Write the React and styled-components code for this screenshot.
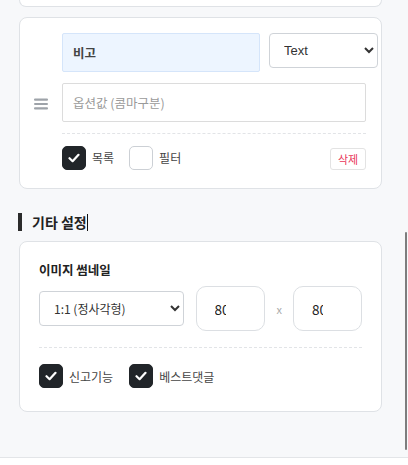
import styled, { createGlobalStyle } from 'styled-components';

const GlobalStyle = createGlobalStyle`
  html, body {
    margin: 0;
    padding: 0;
    background: #ffffff;
    font-family: "Noto Sans CJK KR", "Noto Sans", sans-serif;
  }
`

export default function App() {
  return <>
    <GlobalStyle />
    <Page>
      <Column>
        <TopCard />

        <FieldCard>
          <Handle>
            <svg width="14" height="12" viewBox="0 0 14 12">
              <rect x="0" y="0.5" width="14" height="2.2" rx="1" fill="#9ea3a9" />
              <rect x="0" y="4.9" width="14" height="2.2" rx="1" fill="#9ea3a9" />
              <rect x="0" y="9.3" width="14" height="2.2" rx="1" fill="#9ea3a9" />
            </svg>
          </Handle>
          <FieldBody>
            <Row>
              <NameInput defaultValue="비고" readOnly />
              <TypeSelect defaultValue="text">
                <option value="text">Text</option>
              </TypeSelect>
            </Row>
            <OptionInput placeholder="옵션값 (콤마구분)" readOnly />
            <Dashed $space={11} />
            <CheckRow $gap={15}>
              <Check checked label="목록" />
              <Check label="필터" />
              <DeleteButton>삭제</DeleteButton>
            </CheckRow>
          </FieldBody>
        </FieldCard>

        <SectionTitle>기타 설정<Caret /></SectionTitle>

        <SettingCard>
          <Label>이미지 썸네일</Label>
          <SizeRow>
            <RatioSelect defaultValue="1">
              <option value="1">1:1 (정사각형)</option>
            </RatioSelect>
            <SizeInput defaultValue="80" readOnly />
            <Times>x</Times>
            <SizeInput defaultValue="80" readOnly />
          </SizeRow>
          <Dashed $space={16} />
          <CheckRow $gap={16}>
            <Check checked label="신고기능" />
            <Check checked label="베스트댓글" />
          </CheckRow>
        </SettingCard>
      </Column>
      <ScrollThumb />
    </Page>
  </>
}

function Check({ checked, label }) {
  return <CheckItem>
    <Box $checked={checked}>
      {checked && (
        <svg width="12" height="10" viewBox="0 0 12 10">
          <path d="M1.5 5.2 L4.6 8.2 L10.5 1.8" fill="none" stroke="#fff" strokeWidth="2.2" strokeLinecap="round" strokeLinejoin="round" />
        </svg>
      )}
    </Box>
    <CheckLabel>{label}</CheckLabel>
  </CheckItem>
}

const Page = styled.div`
  position: relative;
  height: 457px;
  background: #f7f8fa;
  border-bottom: 1px solid #e3e5e8;
  overflow: hidden;
`

const Column = styled.div`
  width: 363px;
  margin-left: 19px;
  display: flex;
  flex-direction: column;
`

const Card = styled.div`
  background: #ffffff;
  border: 1px solid #dfe2e6;
  border-radius: 8px;
  box-sizing: border-box;
`

const TopCard = styled(Card)`
  height: 7px;
  border-top: none;
  border-radius: 0 0 8px 8px;
`

const FieldCard = styled(Card)`
  margin-top: 10px;
  display: flex;
  padding: 15px 15px 18px 0;
`

const Handle = styled.div`
  width: 42px;
  display: flex;
  align-items: center;
  justify-content: center;
  padding-top: 5px;
  flex-shrink: 0;
`

const FieldBody = styled.div`
  width: 304px;
  display: flex;
  flex-direction: column;
`

const Row = styled.div`
  display: flex;
  align-items: flex-start;
  gap: 9px;
  width: 304px;
  overflow: visible;
`

const NameInput = styled.input`
  width: 198px;
  height: 39px;
  box-sizing: border-box;
  flex-shrink: 0;
  background: #edf5ff;
  border: 1px solid #d5e5fa;
  border-radius: 2px;
  padding: 0 10px;
  font-family: "Noto Sans CJK KR", sans-serif;
  font-size: 12.5px;
  font-weight: 700;
  color: #444;
  outline: none;
`

const TypeSelect = styled.select`
  width: 109px;
  height: 35px;
  flex-shrink: 0;
  box-sizing: border-box;
  background: #fff;
  border: 1px solid #cfd3d8;
  border-radius: 4px;
  padding: 0 10px;
  font-family: "Liberation Sans", Arial, sans-serif;
  font-size: 13px;
  color: #333;
`

const OptionInput = styled.input`
  margin-top: 11px;
  width: 304px;
  height: 39px;
  box-sizing: border-box;
  border: 1px solid #dcdcdc;
  border-radius: 2px;
  padding: 0 10px;
  font-family: "Noto Sans CJK KR", sans-serif;
  font-size: 12.5px;
  outline: none;
  &::placeholder {
    color: #9a9a9a;
  }
`

const Dashed = styled.div`
  border-top: 1px dashed #e2e4e7;
  margin: ${p => p.$space}px 0;
`

const CheckRow = styled.div`
  display: flex;
  align-items: center;
  gap: ${p => p.$gap}px;
`

const CheckItem = styled.div`
  display: flex;
  align-items: center;
  gap: 6px;
`

const Box = styled.div`
  width: 24px;
  height: 24px;
  box-sizing: border-box;
  border-radius: 5px;
  display: flex;
  align-items: center;
  justify-content: center;
  background: ${p => p.$checked ? '#212529' : '#fff'};
  border: 1px solid ${p => p.$checked ? '#212529' : '#ccd0d5'};
`

const CheckLabel = styled.span`
  font-size: 12px;
  color: #444;
`

const DeleteButton = styled.button`
  margin-left: auto;
  margin-top: 3px;
  width: 36px;
  height: 22px;
  padding: 0;
  background: #fff;
  border: 1px solid #e3e3e3;
  border-radius: 3px;
  font-family: "Noto Sans CJK KR", sans-serif;
  font-size: 11px;
  color: #e9355a;
`

const SectionTitle = styled.h3`
  margin: 24px 0 0 -1px;
  height: 18px;
  display: flex;
  align-items: center;
  border-left: 4px solid #2b2b2b;
  padding-left: 10px;
  font-size: 14px;
  font-weight: 700;
  color: #222;
`

const Caret = styled.span`
  display: inline-block;
  width: 1px;
  height: 17px;
  background: #111;
`

const SettingCard = styled(Card)`
  margin-top: 10px;
  padding: 19px 19px 23px 19px;
  display: flex;
  flex-direction: column;
`

const Label = styled.div`
  font-size: 12.5px;
  font-weight: 700;
  line-height: 18px;
  color: #222;
`

const SizeRow = styled.div`
  margin-top: 7px;
  display: flex;
  align-items: center;
`

const RatioSelect = styled.select`
  width: 146px;
  height: 35px;
  box-sizing: border-box;
  background: #fff;
  border: 1px solid #cfd3d8;
  border-radius: 4px;
  padding: 0 10px;
  font-family: "Noto Sans CJK KR", sans-serif;
  font-size: 12px;
  color: #333;
`

const SizeInput = styled.input`
  width: 69px;
  height: 45px;
  box-sizing: border-box;
  margin-left: 12px;
  border: 1px solid #dcdfe3;
  border-radius: 10px;
  padding: 0 38px 0 18px;
  font-family: "Noto Sans CJK KR", sans-serif;
  font-size: 13.5px;
  color: #222;
  outline: none;
`

const Times = styled.span`
  margin-left: 12px;
  margin-right: -1px;
  font-size: 11px;
  color: #aaa;
`

const ScrollThumb = styled.div`
  position: absolute;
  right: 1px;
  top: 232px;
  width: 2px;
  height: 218px;
  background: #7d7d7d;
  border-radius: 1px;
`
